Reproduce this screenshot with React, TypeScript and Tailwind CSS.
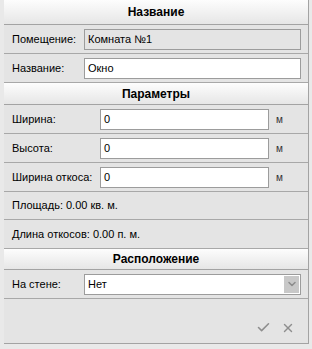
import { Check, X, ChevronDown } from 'lucide-react';

const font = { fontFamily: '"Liberation Sans", Arial, sans-serif' };

function Header({ title, h }: { title: string; h: string }) {
  return (
    <div
      className={`${h} flex items-center justify-center border-b border-[#a3a3a3] bg-gradient-to-b from-[#fdfdfd] to-[#e6e6e6] text-[12px] font-bold text-black`}
    >
      {title}
    </div>
  );
}

function Row({ children, h = 'h-[29px]' }: { children: React.ReactNode; h?: string }) {
  return (
    <div className={`${h} flex items-center border-b border-[#a8a8a8] pl-[8px] text-[11px] text-black`}>
      {children}
    </div>
  );
}

function Field({ value, disabled = false, width }: { value: string; disabled?: boolean; width: string }) {
  return (
    <div
      className={`${width} h-[21px] flex items-center border border-[#9c9c9c] pl-[3px] ${
        disabled ? 'bg-[#e4e4e4]' : 'bg-white'
      }`}
    >
      {value}
    </div>
  );
}

export default function App() {
  return (
    <div className="w-[312px] h-[349px] bg-[#e9e9e9]" style={font}>
      <div className="ml-[4px] w-[305px] h-[344px] border-r border-b border-[#a3a3a3] bg-[#e4e4e4] flex flex-col">
        <Header title="Название" h="h-[25px]" />
        <Row>
          <span className="w-[72px]">Помещение:</span>
          <Field value="Комната №1" disabled width="w-[217px]" />
        </Row>
        <Row>
          <span className="w-[72px]">Название:</span>
          <Field value="Окно" width="w-[217px]" />
        </Row>
        <Header title="Параметры" h="h-[22px]" />
        {['Ширина:', 'Высота:', 'Ширина откоса:'].map(label => (
          <Row key={label}>
            <span className="w-[88px]">{label}</span>
            <Field value="0" width="w-[169px]" />
            <span className="ml-[7px] text-[10px] text-[#333]">м</span>
          </Row>
        ))}
        <Row h="h-[28px]">Площадь: 0.00 кв. м.</Row>
        <Row>Длина откосов: 0.00 п. м.</Row>
        <Header title="Расположение" h="h-[21px]" />
        <Row>
          <span className="w-[72px]">На стене:</span>
          <div className="w-[217px] h-[21px] flex items-center justify-between border border-[#9c9c9c] bg-white pl-[3px] pr-[1px]">
            <span>Нет</span>
            <div className="w-[15px] h-[17px] flex items-center justify-center bg-[#c8c8c8]">
              <ChevronDown size={12} strokeWidth={3} className="text-[#8c8c8c]" />
            </div>
          </div>
        </Row>
        <div className="flex-1 flex items-end justify-end gap-[10px] pr-[13px] pb-[8px]">
          <Check size={15} strokeWidth={2.5} className="text-[#8e8e8e]" />
          <X size={14} strokeWidth={2.5} className="text-[#8e8e8e]" />
        </div>
      </div>
    </div>
  );
}
